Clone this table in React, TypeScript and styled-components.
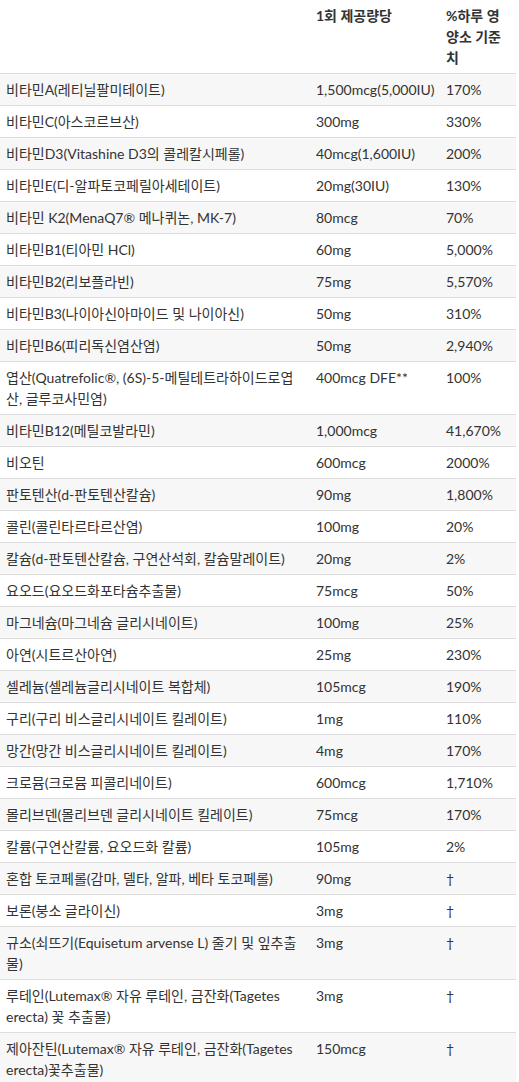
import React from "react";
import styled, { createGlobalStyle } from "styled-components";

const GlobalStyle = createGlobalStyle`
  html, body {
    margin: 0;
    padding: 0;
    background: #ffffff;
  }
  body {
    font-family: Lato, "Noto Sans CJK KR", sans-serif;
    color: #333333;
  }
`;

const Table = styled.table`
  width: 516px;
  border-collapse: collapse;
  table-layout: fixed;
  font-size: 14px;
  line-height: 21px;
`;

const HeadCell = styled.th`
  padding: 5px 6px;
  text-align: left;
  vertical-align: top;
  font-weight: 700;
  border-bottom: 1px solid #dddddd;
`;

const Row = styled.tr`
  &:nth-child(odd) {
    background: #f7f7f7;
  }
`;

const Cell = styled.td<{ $nowrap?: boolean }>`
  padding: 5px 6px;
  vertical-align: top;
  border-bottom: 1px solid #dddddd;
  white-space: ${(p) => (p.$nowrap ? "nowrap" : "normal")};
`;

type Nutrient = [string, string, string];

const rows: Nutrient[] = [
  ["비타민A(레티닐팔미테이트)", "1,500mcg(5,000IU)", "170%"],
  ["비타민C(아스코르브산)", "300mg", "330%"],
  ["비타민D3(Vitashine D3의 콜레칼시페롤)", "40mcg(1,600IU)", "200%"],
  ["비타민E(디-알파토코페릴아세테이트)", "20mg(30IU)", "130%"],
  ["비타민 K2(MenaQ7® 메나퀴논, MK-7)", "80mcg", "70%"],
  ["비타민B1(티아민 HCl)", "60mg", "5,000%"],
  ["비타민B2(리보플라빈)", "75mg", "5,570%"],
  ["비타민B3(나이아신아마이드 및 나이아신)", "50mg", "310%"],
  ["비타민B6(피리독신염산염)", "50mg", "2,940%"],
  ["엽산(Quatrefolic®, (6S)-5-메틸테트라하이드로엽산, 글루코사민염)", "400mcg DFE**", "100%"],
  ["비타민B12(메틸코발라민)", "1,000mcg", "41,670%"],
  ["비오틴", "600mcg", "2000%"],
  ["판토텐산(d-판토텐산칼슘)", "90mg", "1,800%"],
  ["콜린(콜린타르타르산염)", "100mg", "20%"],
  ["칼슘(d-판토텐산칼슘, 구연산석회, 칼슘말레이트)", "20mg", "2%"],
  ["요오드(요오드화포타슘추출물)", "75mcg", "50%"],
  ["마그네슘(마그네슘 글리시네이트)", "100mg", "25%"],
  ["아연(시트르산아연)", "25mg", "230%"],
  ["셀레늄(셀레늄글리시네이트 복합체)", "105mcg", "190%"],
  ["구리(구리 비스글리시네이트 킬레이트)", "1mg", "110%"],
  ["망간(망간 비스글리시네이트 킬레이트)", "4mg", "170%"],
  ["크로뮴(크로뮴 피콜리네이트)", "600mcg", "1,710%"],
  ["몰리브덴(몰리브덴 글리시네이트 킬레이트)", "75mcg", "170%"],
  ["칼륨(구연산칼륨, 요오드화 칼륨)", "105mg", "2%"],
  ["혼합 토코페롤(감마, 델타, 알파, 베타 토코페롤)", "90mg", "†"],
  ["보론(붕소 글라이신)", "3mg", "†"],
  ["규소(쇠뜨기(Equisetum arvense L) 줄기 및 잎추출물)", "3mg", "†"],
  ["루테인(Lutemax® 자유 루테인, 금잔화(Tagetes erecta) 꽃 추출물)", "3mg", "†"],
  ["제아잔틴(Lutemax® 자유 루테인, 금잔화(Tagetes erecta)꽃추출물)", "150mcg", "†"],
];

export default function App() {
  return (
    <>
      <GlobalStyle />
      <Table>
        <colgroup>
          <col style={{ width: 310 }} />
          <col style={{ width: 130 }} />
          <col />
        </colgroup>
        <thead>
          <tr>
            <HeadCell />
            <HeadCell>1회 제공량당</HeadCell>
            <HeadCell>%하루 영양소 기준치</HeadCell>
          </tr>
        </thead>
        <tbody>
          {rows.map(([name, amount, daily]) => (
            <Row key={name}>
              <Cell>{name}</Cell>
              <Cell $nowrap>{amount}</Cell>
              <Cell>{daily}</Cell>
            </Row>
          ))}
        </tbody>
      </Table>
    </>
  );
}
